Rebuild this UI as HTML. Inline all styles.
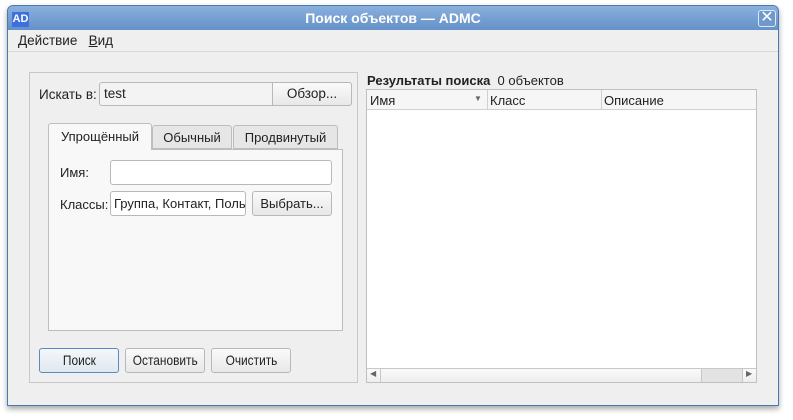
<!DOCTYPE html>
<html><head><meta charset="utf-8"><style>
*{box-sizing:border-box;margin:0;padding:0}
body{width:793px;height:420px;background:#fff;position:relative;overflow:hidden;font-family:"Liberation Sans",sans-serif;font-size:13px;color:#222}
.a{position:absolute}
.win{left:7px;top:5px;width:772px;height:401px;background:#efefef;border:1px solid #4a78b0;border-radius:6px 6px 0 0;box-shadow:0 3px 6px rgba(0,0,0,.35)}
.title{left:8px;top:6px;width:770px;height:24px;background:linear-gradient(#8ab0dc,#6491c8);border-radius:5px 5px 0 0;color:#fff;font-weight:bold;font-size:14px;text-align:center;line-height:24px}
.btn{background:linear-gradient(#fafafa,#e8e8e8);border:1px solid #b8b8b8;border-radius:3px;text-align:center}
.inp{background:#fff;border:1px solid #b8b8b8;border-radius:3px}
.c{transform:scaleX(.85);display:inline-block;font-size:14px}
</style></head><body>
<div class="a win"></div>
<div class="a title">Поиск объектов — ADMC</div>
<div class="a" style="left:12px;top:12px;width:17px;height:15px;background:#3d6fe0;color:#fff;font-weight:bold;font-size:11px;line-height:15px;text-align:center">AD</div>
<div class="a" style="left:758px;top:10px;width:18px;height:17px;border:1px solid #dfe9f5;border-radius:3px;background:#6f98cc;color:#fff;font-size:16px;line-height:14px;text-align:center">✕</div>
<div class="a" style="left:18px;top:33px;font-size:13.5px"><u>Д</u>ействие&nbsp;&nbsp;&nbsp;<u>В</u>ид</div>
<div class="a" style="left:8px;top:51px;width:770px;height:1px;background:#d8d8d8"></div>
<div class="a" style="left:29px;top:72px;width:329px;height:311px;border:1px solid #c8c8c8"></div>
<div class="a" style="left:39px;top:87px;font-size:13.5px">Искать в:</div>
<div class="a inp" style="left:99px;top:82px;width:253px;height:24px;background:#f3f3f3"></div>
<div class="a" style="left:104px;top:86px;font-size:13.5px">test</div>
<div class="a btn" style="left:272px;top:82px;width:80px;height:24px;border-radius:0 3px 3px 0;line-height:22px;font-size:13.5px">Обзор...</div>
<div class="a" style="left:48px;top:149px;width:295px;height:182px;background:#f8f8f8;border:1px solid #bdbdbd"></div>
<div class="a" style="left:48px;top:123px;width:104px;height:27px;background:#f8f8f8;border:1px solid #bdbdbd;border-bottom:none;border-radius:3px 3px 0 0;text-align:center;line-height:26px">Упрощённый</div>
<div class="a" style="left:152px;top:125px;width:80px;height:24px;background:#e6e6e6;border:1px solid #bdbdbd;border-radius:3px 3px 0 0;text-align:center;line-height:24px">Обычный</div>
<div class="a" style="left:233px;top:125px;width:105px;height:24px;background:#e6e6e6;border:1px solid #bdbdbd;border-radius:3px 3px 0 0;text-align:center;line-height:24px">Продвинутый</div>
<div class="a" style="left:60px;top:165px">Имя:</div>
<div class="a inp" style="left:110px;top:160px;width:222px;height:25px"></div>
<div class="a" style="left:60px;top:197px">Классы:</div>
<div class="a inp" style="left:110px;top:191px;width:136px;height:25px;overflow:hidden;white-space:nowrap;padding:4px 0 0 3px">Группа, Контакт, Пользователь</div>
<div class="a btn" style="left:252px;top:191px;width:80px;height:25px;line-height:23px">Выбрать...</div>
<div class="a btn" style="left:39px;top:348px;width:80px;height:25px;line-height:23px;border-color:#5a8bc0;background:linear-gradient(#f4f7fa,#dfe8f0)"><span class="c">Поиск</span></div>
<div class="a btn" style="left:125px;top:348px;width:80px;height:25px;line-height:23px;white-space:nowrap"><span class="c">Остановить</span></div>
<div class="a btn" style="left:211px;top:348px;width:80px;height:25px;line-height:23px"><span class="c">Очистить</span></div>
<div class="a" style="left:367px;top:73px;font-size:13px"><b>Результаты поиска</b>&nbsp;&nbsp;0 объектов</div>
<div class="a" style="left:366px;top:89px;width:391px;height:294px;background:#fff;border:1px solid #c0c0c0"></div>
<div class="a" style="left:367px;top:90px;width:389px;height:20px;background:#f6f6f6;border-bottom:1px solid #d0d0d0"></div>
<div class="a" style="left:487px;top:90px;width:1px;height:20px;background:#d0d0d0"></div>
<div class="a" style="left:601px;top:90px;width:1px;height:20px;background:#d0d0d0"></div>
<div class="a" style="left:370px;top:93px">Имя</div>
<div class="a" style="left:474px;top:94px;font-size:8px;color:#666">▼</div>
<div class="a" style="left:490px;top:93px">Класс</div>
<div class="a" style="left:604px;top:93px">Описание</div>
<div class="a" style="left:367px;top:368px;width:389px;height:14px;background:linear-gradient(#fafafa,#eee);border-top:1px solid #c8c8c8"></div>
<div class="a" style="left:380px;top:368px;width:1px;height:14px;background:#c8c8c8"></div>
<div class="a" style="left:701px;top:369px;width:42px;height:13px;background:#e3e3e3;border-left:1px solid #c8c8c8;border-right:1px solid #c8c8c8"></div>
<div class="a" style="left:370px;top:369px;font-size:8px;color:#666">◀</div>
<div class="a" style="left:746px;top:369px;font-size:8px;color:#666">▶</div>
</body></html>
